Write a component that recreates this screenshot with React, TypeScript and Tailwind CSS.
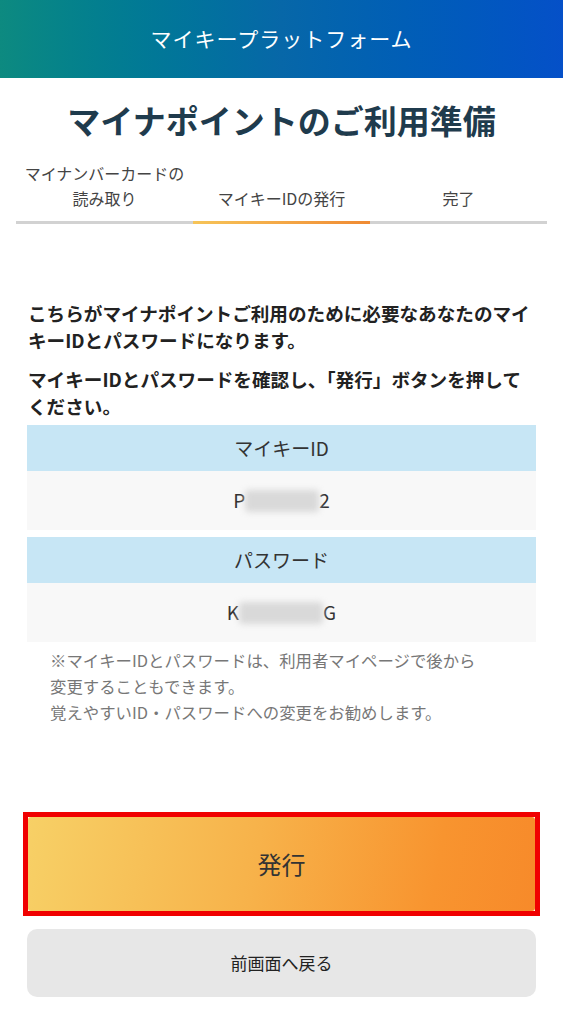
import React from 'react';

const FONT = { fontFamily: '"Noto Sans CJK JP", "Noto Sans", sans-serif' };

const steps = [
  { label: ['マイナンバーカードの', '読み取り'], active: false },
  { label: ['マイキーIDの発行'], active: true },
  { label: ['完了'], active: false },
];

const Masked: React.FC<{ first: string; last: string; width: string }> = ({ first, last, width }) => (
  <span className="inline-flex items-center">
    <span>{first}</span>
    <span className={`inline-block h-[22px] ${width} rounded-sm bg-[#d9d9d9] blur-[3px]`} />
    <span>{last}</span>
  </span>
);

const App: React.FC = () => {
  return (
    <div className="min-h-[1024px] w-full bg-white text-[#333]" style={FONT}>
      {/* Header */}
      <header className="flex h-[78px] items-center justify-center bg-gradient-to-r from-[#0d8a80] via-[#0767a8] to-[#0550c8]">
        <h1 className="text-[21px] tracking-[1px] text-white">マイキープラットフォーム</h1>
      </header>

      {/* Title */}
      <h2 className="mt-[18px] text-center text-[33px] font-bold leading-[48px] text-[#1f3b4d]">
        マイナポイントのご利用準備
      </h2>

      {/* Steps */}
      <div className="mx-4 mt-[17px] grid grid-cols-3">
        {steps.map((s, i) => (
          <div key={i} className="flex flex-col justify-end">
            <p className="pb-[10px] text-center text-[16px] leading-[25px] text-[#444]">
              {s.label.map((l, j) => (
                <React.Fragment key={j}>
                  {l}
                  {j < s.label.length - 1 && <br />}
                </React.Fragment>
              ))}
            </p>
            <div
              className={
                s.active
                  ? 'h-[3px] bg-gradient-to-r from-[#f6c458] to-[#ef8a33]'
                  : 'h-[3px] bg-[#d2d2d2]'
              }
            />
          </div>
        ))}
      </div>

      <main className="px-[27px]">
        {/* Description */}
        <div className="mt-[76px] pl-px text-[18.6px] font-bold leading-[26.5px] text-[#222]">
          <p>
            こちらがマイナポイントご利用のために必要なあなたのマイ
            <br />
            キーIDとパスワードになります。
          </p>
          <p className="mt-[13px]">
            マイキーIDとパスワードを確認し、「発行」ボタンを押して
            <br />
            ください。
          </p>
        </div>

        {/* ID / Password table */}
        <div className="mt-[6px] flex flex-col text-[19px] text-[#333]">
          <div className="flex h-[46px] items-center justify-center bg-[#c7e6f5]">マイキーID</div>
          <div className="flex h-[59px] items-center justify-center bg-[#f8f8f8]">
            <Masked first="P" last="2" width="w-[74px]" />
          </div>
          <div className="mt-[7px] flex h-[46px] items-center justify-center bg-[#c7e6f5]">パスワード</div>
          <div className="flex h-[59px] items-center justify-center bg-[#f8f8f8]">
            <Masked first="K" last="G" width="w-[84px]" />
          </div>
        </div>

        {/* Note */}
        <p className="mt-[5px] pl-[23px] text-[16.4px] leading-[26px] text-[#777]">
          ※マイキーIDとパスワードは、利用者マイページで後から
          <br />
          変更することもできます。
          <br />
          覚えやすいID・パスワードへの変更をお勧めします。
        </p>

        {/* Buttons */}
        <div className="mt-[87px] -mx-[4px] border-[5px] border-[#f00000] bg-white">
          <button className="flex h-[94px] w-full items-center justify-center rounded-[3px] bg-[linear-gradient(100deg,#f7d066_0%,#f7b24a_45%,#f8942f_80%,#f78a2a_100%)] text-[24px] text-[#333]">
            発行
          </button>
        </div>
        <button className="mt-[13px] flex h-[68px] w-full items-center justify-center rounded-[10px] bg-[#e7e7e7] text-[17px] text-[#222]">
          前画面へ戻る
        </button>
      </main>
    </div>
  );
};

export default App;
